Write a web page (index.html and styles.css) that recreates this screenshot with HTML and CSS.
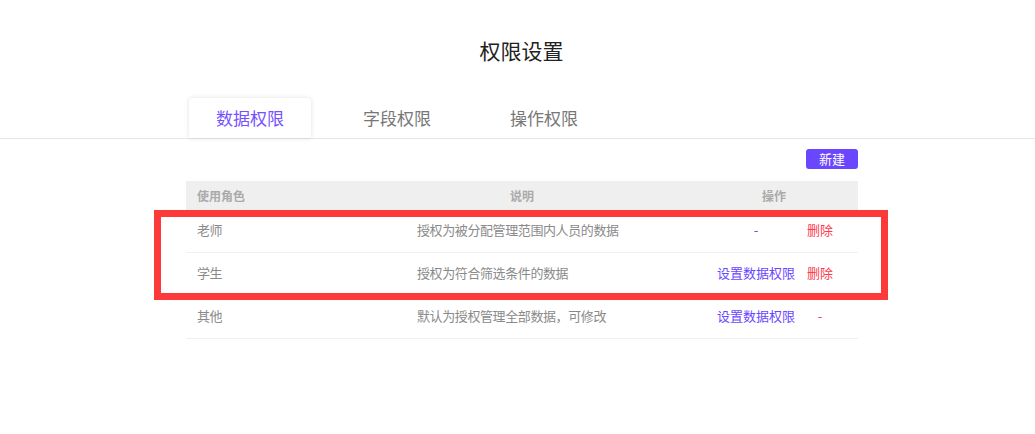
FILE: index.html
```html
<!DOCTYPE html>
<html lang="zh-CN">
<head>
  <meta charset="UTF-8">
  <title>权限设置</title>
  <link rel="stylesheet" href="styles.css">
</head>
<body>
  <h1 class="title">权限设置</h1>
  <div class="tabs">
    <div class="tabs-inner">
      <div class="tab active">数据权限</div>
      <div class="tab">字段权限</div>
      <div class="tab">操作权限</div>
    </div>
  </div>
  <div class="content">
    <div class="toolbar">
      <button class="btn-new">新建</button>
    </div>
    <div class="table">
      <div class="row head">
        <div class="cell">使用角色</div>
        <div class="cell desc-head">说明</div>
        <div class="cell ops-head">操作</div>
      </div>
      <div class="row">
        <div class="cell">老师</div>
        <div class="cell">授权为被分配管理范围内人员的数据</div>
        <div class="cell ops"><span class="op link">-</span><span class="op del">删除</span></div>
      </div>
      <div class="row">
        <div class="cell">学生</div>
        <div class="cell">授权为符合筛选条件的数据</div>
        <div class="cell ops"><span class="op link">设置数据权限</span><span class="op del">删除</span></div>
      </div>
      <div class="row">
        <div class="cell">其他</div>
        <div class="cell">默认为授权管理全部数据，可修改</div>
        <div class="cell ops"><span class="op link">设置数据权限</span><span class="op del">-</span></div>
      </div>
    </div>
    <div class="mark"></div>
  </div>
</body>
</html>
```

FILE: styles.css
```css
* {
  box-sizing: border-box;
  margin: 0;
  padding: 0;
}
body {
  font-family: "Noto Sans CJK SC", "Noto Sans", sans-serif;
  background: #fff;
  color: #333;
}
.title {
  font-size: 21px;
  font-weight: 400;
  line-height: 28px;
  text-align: center;
  padding-top: 36px;
  margin-left: 8px;
  color: #222;
}
.tabs {
  margin-top: 34px;
  border-bottom: 1px solid #e6e6ec;
}
.tabs-inner {
  display: flex;
  gap: 25px;
  margin-left: 189px;
}
.tab {
  width: 122px;
  height: 40px;
  line-height: 40px;
  text-align: center;
  font-size: 17px;
  color: #777;
}
.tab.active {
  color: #7652ff;
  background: #fff;
  border-radius: 4px 4px 0 0;
  box-shadow: 0 0 5px rgba(0, 0, 0, 0.12);
}
.content {
  position: relative;
  width: 672px;
  margin-left: 186px;
}
.toolbar {
  display: flex;
  justify-content: flex-end;
  padding-top: 10px;
}
.btn-new {
  width: 52px;
  height: 20px;
  border: none;
  border-radius: 3px;
  background: #6a46ff;
  color: #fff;
  font-family: inherit;
  font-size: 13px;
  line-height: 20px;
}
.table {
  margin-top: 12px;
}
.row {
  display: grid;
  grid-template-columns: 220px 284px 168px;
  height: 43px;
  padding-bottom: 3px;
  align-items: center;
  border-bottom: 1px solid #f0f0f0;
  font-size: 13px;
  letter-spacing: -0.4px;
  color: #8a8a8a;
}
.row.head {
  height: 29px;
  padding-bottom: 0;
  background: #efefef;
  border-bottom: none;
  font-size: 12px;
  font-weight: 700;
  letter-spacing: 0;
  color: #aaa;
}
.cell {
  padding-left: 11px;
}
.desc-head {
  padding-left: 104px;
}
.ops-head {
  text-align: center;
  padding-left: 0;
}
.ops {
  display: flex;
  padding-left: 16px;
  letter-spacing: 0;
}
.op {
  text-align: center;
}
.op.link {
  width: 100px;
  color: #6a46ff;
}
.op.del {
  width: 28px;
  color: #ff3b4e;
}
.mark {
  position: absolute;
  left: -32px;
  top: 71px;
  width: 734px;
  height: 90px;
  border: 7px solid #fd3a3a;
}
```
